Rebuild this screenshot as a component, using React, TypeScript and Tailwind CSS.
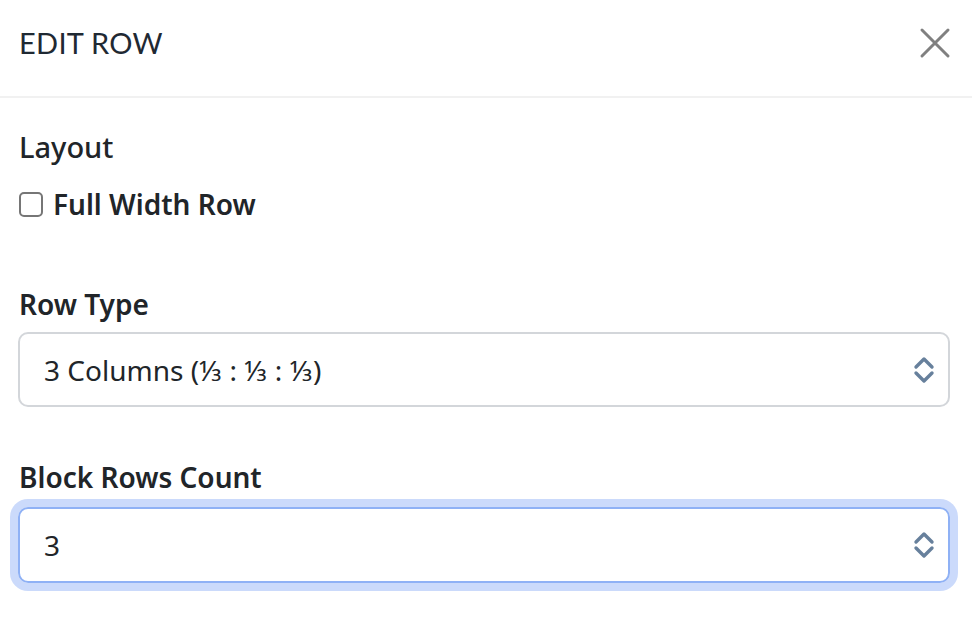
import React from "react";

function Chevrons() {
  return (
    <svg width="22" height="30" viewBox="0 0 22 30" fill="none" className="shrink-0">
      <path d="M3 12 L11 4 L19 12" stroke="#67809c" strokeWidth="3.4" strokeLinecap="round" strokeLinejoin="round" />
      <path d="M3 18 L11 26 L19 18" stroke="#67809c" strokeWidth="3.4" strokeLinecap="round" strokeLinejoin="round" />
    </svg>
  );
}

export default function App() {
  return (
    <div className="w-[972px] h-[622px] bg-white text-[#212529] overflow-hidden" style={{ fontFamily: '"Noto Sans", "Open Sans", sans-serif' }}>
      <div className="h-[98px] flex items-center justify-between pl-[19px] pr-[21px] border-b-2 border-[#f1f1f1]">
        <div className="text-[29px] leading-none text-[#1f2933] tracking-[0.3px] -mt-[12px]" style={{ fontFamily: 'Lato, "Noto Sans", sans-serif' }}>EDIT ROW</div>
        <svg width="32" height="32" viewBox="0 0 32 32" className="-mt-[10px]">
          <path d="M3 3 L29 29 M29 3 L3 29" stroke="#808080" strokeWidth="3" strokeLinecap="round" />
        </svg>
      </div>
      <div className="pl-[18px] pr-[22px] pt-[29px]">
        <div className="text-[29px] leading-[40px] font-medium pl-[1px]">Layout</div>
        <label className="mt-[18px] flex items-center h-[38px] gap-[10px] pl-[1px]">
          <span className="w-[24px] h-[25px] rounded-[5px] border-2 border-[#767676] bg-white shrink-0" />
          <span className="text-[28px] leading-[38px] font-semibold">Full Width Row</span>
        </label>
        <div className="mt-[62px] text-[28px] leading-[38px] font-semibold pl-[1px]">Row Type</div>
        <div className="mt-[9px] h-[75px] rounded-[10px] border-2 border-[#d3d6da] flex items-center justify-between pl-[24px] pr-[13px]">
          <span className="text-[28px] leading-[38px]">3 Columns (⅓ : ⅓ : ⅓)</span>
          <Chevrons />
        </div>
        <div className="mt-[51px] text-[28px] leading-[38px] font-semibold pl-[1px]">Block Rows Count</div>
        <div className="mt-[11px] h-[76px] rounded-[10px] border-2 border-[#8fb1f5] ring-[8px] ring-[#cbdafb] flex items-center justify-between pl-[24px] pr-[13px]">
          <span className="text-[28px] leading-[38px]">3</span>
          <Chevrons />
        </div>
      </div>
    </div>
  );
}
